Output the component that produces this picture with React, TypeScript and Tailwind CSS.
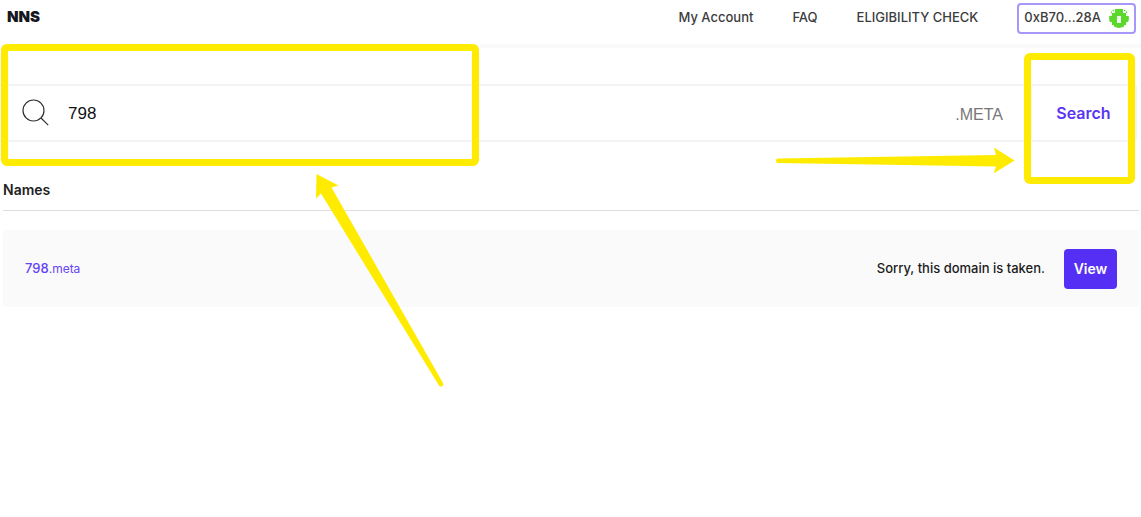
import React, { useState } from 'react';

const Avatar: React.FC = () => (
  <svg width="20" height="20" viewBox="0 0 20 20" aria-hidden="true">
    <defs>
      <clipPath id="avatar-clip">
        <circle cx="10" cy="10" r="10" />
      </clipPath>
    </defs>
    <g clipPath="url(#avatar-clip)">
      <rect width="20" height="20" fill="#f1f6ef" />
      <path
        fill="#5ad82b"
        d="M2 0h3v3H3v2H0V3h2zM15 0h3v3h2v2h-3V3h-2zM6 1h8v4h3v3h3v6h-3v3h-2v3H5v-3H3v-3H0V8h3V5h3z"
      />
      <rect x="8" y="8" width="4" height="7" fill="#f1f6ef" />
    </g>
  </svg>
);

const SearchIcon: React.FC = () => (
  <svg width="28" height="28" viewBox="0 0 28 28" fill="none" stroke="#333" strokeWidth="1.2" aria-hidden="true">
    <circle cx="11.5" cy="11.5" r="10.5" />
    <path d="M19 19l7.200 7.200" />
  </svg>
);

const Header: React.FC = () => {
  return (
    <header className="flex h-12 items-start justify-between border-b-4 border-[#fafafa] pl-[7px] pr-[5px]">
      <a href="#home" className="flex h-[34px] items-center text-[15px] font-black text-[#16161d]">
        NNS
      </a>
      <nav className="flex h-9 items-center gap-[39px] text-[13px] font-medium text-[#3c3c3c]">
        <a href="#account">My Account</a>
        <a href="#faq">FAQ</a>
        <a href="#eligibility">ELIGIBILITY CHECK</a>
        <button
          type="button"
          className="flex h-[31px] items-center gap-2 rounded border-2 border-[#a797fb] px-[5px]"
        >
          <span>0xB70...28A</span>
          <Avatar />
        </button>
      </nav>
    </header>
  );
};

const SearchBar: React.FC = () => {
  const [name, setName] = useState('798');

  return (
    <form
      className="mr-1 flex h-[58px] items-center rounded-r border-y-2 border-r-2 border-[#f3f3f3]"
      onSubmit={(e) => e.preventDefault()}
    >
      <label htmlFor="name" className="pl-[22px] pr-[18px]">
        <SearchIcon />
      </label>
      <input
        id="name"
        type="text"
        aria-label="Name"
        value={name}
        onChange={(e) => setName(e.target.value)}
        className="min-w-0 flex-1 pt-0.5 font-['Liberation_Sans',sans-serif] text-[17px] text-[#111] outline-none"
      />
      <span className="mr-[27px] pt-1 font-['Liberation_Sans',sans-serif] text-base text-[#777]">.META</span>
      <button
        type="submit"
        className="h-full w-[105px] rounded-l border-l-2 border-[#f3f3f3] text-base font-semibold text-[#5a35f4]"
      >
        Search
      </button>
    </form>
  );
};

const Results: React.FC = () => {
  return (
    <section className="ml-[3px] mr-[2px]">
      <h2 className="border-b border-[#dedede] pb-2 text-sm leading-6 font-semibold text-[#222]">Names</h2>
      <div className="mt-[19px] flex h-[77px] items-center justify-between rounded bg-[#fafafa] px-[22px]">
        <a href="#798" className="text-xs text-[#6544f5]">
          <span className="text-[13px] font-medium">798</span>.meta
        </a>
        <div className="flex items-center">
          <p className="mr-[19px] text-[13px] font-medium text-[#1c1c1c]">Sorry, this domain is taken.</p>
          <button type="button" className="h-10 w-[53px] rounded bg-[#5530f4] text-sm font-semibold text-white">
            View
          </button>
        </div>
      </div>
    </section>
  );
};

// Hand-drawn hints pointing at the search field and the search button
const Hints: React.FC = () => {
  return (
    <>
      <div className="pointer-events-none absolute top-11 left-px h-[122px] w-[478px] rounded-md border-7 border-[#ffeb00]" />
      <svg className="pointer-events-none absolute top-[174px] left-[316px]" width="130" height="214" viewBox="0 0 130 214" fill="#ffeb00">
        <path d="M0.5 0L22.5 11.5L15.5 13.5L127 209Q128 212 125.500 212.500Q124 213 123 211.500L5 19.500L0 24.500Z" />
      </svg>
      <div className="pointer-events-none absolute top-[53px] right-[6px] h-[131px] w-[111px] rounded-md border-7 border-[#ffeb00]" />
      <svg className="pointer-events-none absolute top-[147px] right-[126px]" width="240" height="28" viewBox="0 0 240 28" fill="#ffeb00">
        <path d="M3 11.500L221 8L219 0.500L239.500 13.500L218.500 26.500L221 19.500L3 16Q1 16 1 13.800Q1 11.500 3 11.500Z" />
      </svg>
    </>
  );
};

export default function App() {
  return (
    <div className="relative min-h-screen bg-white font-[Inter,sans-serif]">
      <Header />
      <main className="pt-9">
        <SearchBar />
        <div className="pt-9">
          <Results />
        </div>
      </main>
      <Hints />
    </div>
  );
}
